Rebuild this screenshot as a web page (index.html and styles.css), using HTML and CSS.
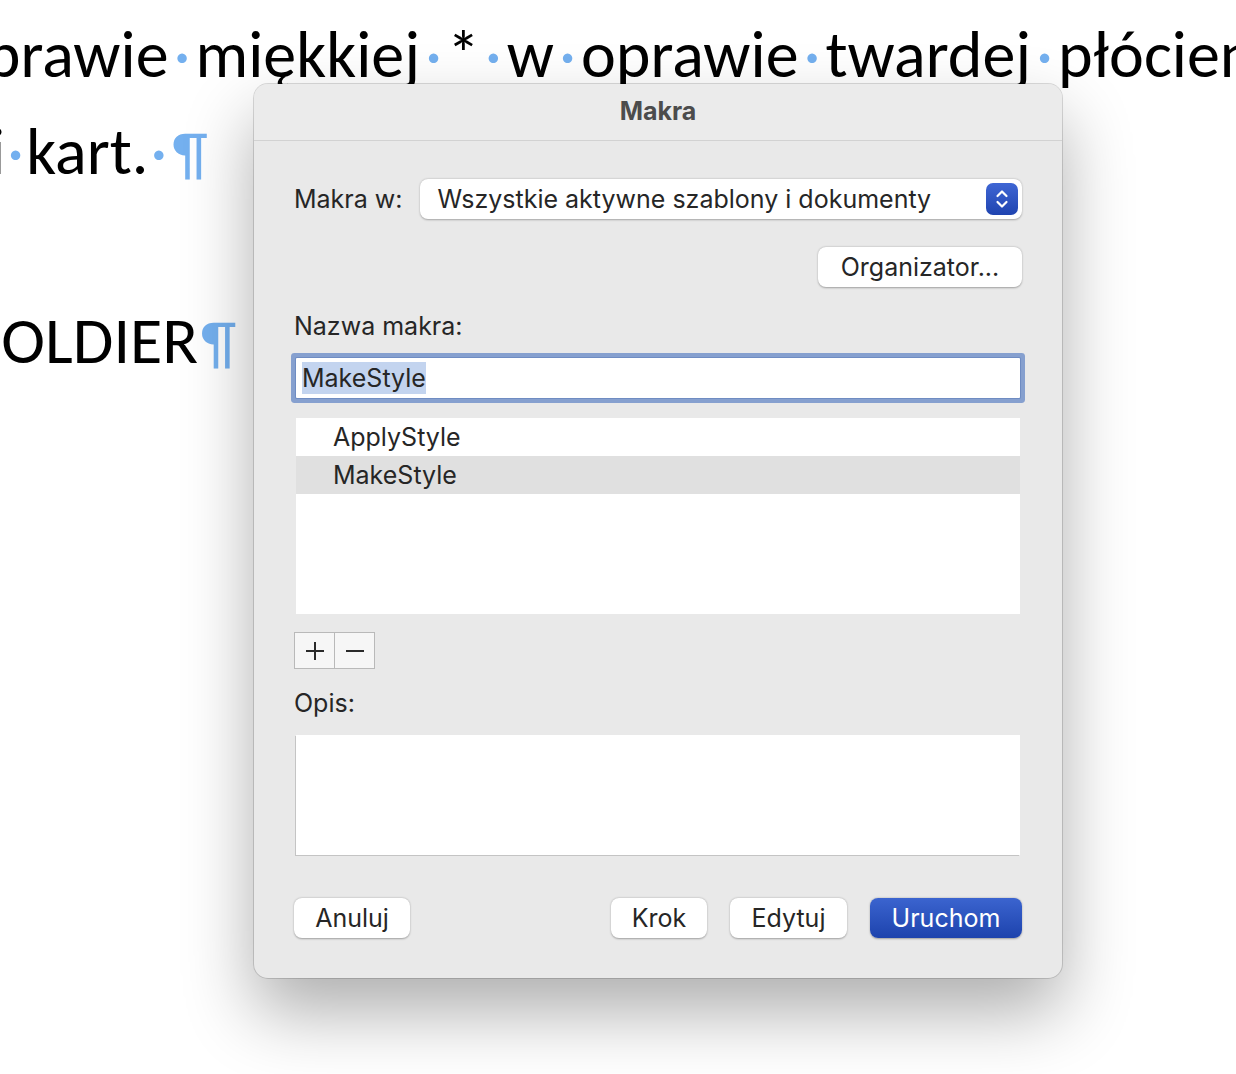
FILE: index.html
```html
<!DOCTYPE html>
<html lang="pl">
<head>
    <meta charset="UTF-8">
    <title>Makra</title>
    <link rel="stylesheet" href="styles.css">
</head>
<body>

    <div class="doc">
        <p class="linia l1">oprawie<span class="sp">·</span>miękkiej<span class="sp">·</span>*<span class="sp">·</span>w<span class="sp">·</span>oprawie<span class="sp">·</span>twardej<span class="sp">·</span>płóciennej</p>
        <p class="linia l2">i<span class="sp">·</span>kart.<span class="sp">·</span><span class="pil">¶</span></p>
        <p class="linia l3">SOLDIER<span class="pil">¶</span></p>
    </div>

    <div class="okno">
        <div class="tytul">Makra</div>

        <div class="tresc">
            <div class="wiersz">
                <span class="etykieta">Makra w:</span>
                <div class="wybor">
                    <span>Wszystkie aktywne szablony i dokumenty</span>
                    <span class="strzalki">
                        <svg width="16" height="22" viewBox="0 0 16 22">
                            <path d="M3.5 8 L8 3.5 L12.5 8" fill="none" stroke="#fff" stroke-width="2.2" stroke-linecap="round" stroke-linejoin="round"/>
                            <path d="M3.5 14 L8 18.5 L12.5 14" fill="none" stroke="#fff" stroke-width="2.2" stroke-linecap="round" stroke-linejoin="round"/>
                        </svg>
                    </span>
                </div>
            </div>

            <div class="wiersz-prawo">
                <button class="btn btn-org">Organizator...</button>
            </div>

            <div class="etykieta nazwa">Nazwa makra:</div>
            <div class="pole"><span class="zazn">MakeStyle</span></div>

            <div class="lista">
                <div class="poz">ApplyStyle</div>
                <div class="poz wybrana">MakeStyle</div>
            </div>

            <div class="plusminus">
                <span class="pm">
                    <svg width="20" height="20" viewBox="0 0 20 20"><path d="M10 1 V19 M1 10 H19" stroke="#2a2a2a" stroke-width="2"/></svg>
                </span>
                <span class="pm">
                    <svg width="20" height="20" viewBox="0 0 20 20"><path d="M1 10 H19" stroke="#2a2a2a" stroke-width="2"/></svg>
                </span>
            </div>

            <div class="etykieta opis-et">Opis:</div>
            <div class="opis"></div>

            <div class="przyciski">
                <button class="btn btn-anuluj">Anuluj</button>
                <div class="prawe">
                    <button class="btn btn-krok">Krok</button>
                    <button class="btn btn-edytuj">Edytuj</button>
                    <button class="btn btn-uruchom">Uruchom</button>
                </div>
            </div>
        </div>
    </div>

</body>
</html>
```

FILE: styles.css
```css
body {
    margin: 0;
    background-color: #ffffff;
    overflow: hidden;
    height: 1074px;
    position: relative;
    font-family: Inter, "Noto Sans", sans-serif;
}

/* tekst dokumentu w tle */
.doc {
    font-family: Carlito, Lato, "Open Sans", sans-serif;
    color: #000;
    font-size: 66px;
    white-space: nowrap;
    overflow: hidden;
}

.linia {
    margin: 0;
    height: 97px;
    line-height: 97px;
}

.l1 {
    margin-left: -49px;
    padding-top: 6px;
}

.l2 {
    margin-left: -10px;
    height: 95px;
}

.l3 {
    margin-top: 94px;
    margin-left: -29px;
}

.sp {
    color: #74b0ef;
    display: inline-block;
    width: 27px;
    text-align: center;
}

.l2 .sp {
    width: 21px;
}

.pil {
    color: #74b0ef;
    font-size: 60px;
    margin-left: 3px;
}

/* okno dialogowe */
.okno {
    position: absolute;
    left: 254px;
    top: 84px;
    width: 808px;
    height: 894px;
    background-color: #e9e9e9;
    border-radius: 14px;
    box-shadow: 0 0 0 1px rgba(0, 0, 0, 0.14), 0 34px 70px rgba(0, 0, 0, 0.32);
    color: #262626;
    font-size: 25px;
}

.tytul {
    height: 56px;
    line-height: 54px;
    text-align: center;
    font-weight: 700;
    color: #4c4c4c;
    border-bottom: 1px solid #d2d2d2;
    background-color: #ebebeb;
    border-radius: 14px 14px 0 0;
}

.tresc {
    padding: 38px 40px 40px 40px;
}

.wiersz {
    display: flex;
    align-items: center;
    gap: 18px;
}

.etykieta {
    line-height: 28px;
}

.wybor {
    flex: 1;
    height: 40px;
    background: #fff;
    border-radius: 8px;
    box-shadow: 0 0.5px 2px rgba(0, 0, 0, 0.3);
    display: flex;
    align-items: center;
    justify-content: space-between;
    padding: 0 4px 0 17px;
}

.strzalki {
    width: 32px;
    height: 32px;
    border-radius: 7px;
    background: linear-gradient(#3f66d4, #1f44b0);
    display: flex;
    align-items: center;
    justify-content: center;
}

.wiersz-prawo {
    display: flex;
    justify-content: flex-end;
    margin-top: 28px;
}

.btn {
    font-family: inherit;
    font-size: 25px;
    color: #262626;
    height: 40px;
    background: #fff;
    border: none;
    border-radius: 8px;
    box-shadow: 0 0.5px 2px rgba(0, 0, 0, 0.32);
    padding: 0;
}

.btn-org { width: 204px; }
.btn-anuluj { width: 116px; }
.btn-krok { width: 96px; }
.btn-edytuj { width: 117px; }

.btn-uruchom {
    width: 152px;
    color: #fff;
    background: linear-gradient(#3b64cf, #1d43ad);
}

.nazwa {
    margin-top: 25px;
}

.pole {
    margin: 18px 2px 0 2px;
    height: 40px;
    background: #fff;
    box-shadow: 0 0 0 1px #6f8cc2, 0 0 0 5px #86a0cf;
    border-radius: 1px;
    display: flex;
    align-items: center;
    padding-left: 6px;
}

.zazn {
    background-color: #c3d4ef;
    line-height: 32px;
}

.lista {
    margin: 20px 2px 0 2px;
    height: 196px;
    background: #fff;
}

.poz {
    height: 38px;
    line-height: 38px;
    padding-left: 37px;
}

.wybrana {
    background-color: #e0e0e0;
}

.plusminus {
    display: flex;
    margin-top: 18px;
}

.pm {
    width: 39px;
    height: 35px;
    border: 1px solid #b9b9b9;
    background: #f6f6f6;
    display: flex;
    align-items: center;
    justify-content: center;
}

.pm + .pm {
    border-left: none;
}

.opis-et {
    margin-top: 20px;
}

.opis {
    margin: 18px 2px 0 2px;
    height: 120px;
    background: #fff;
    box-shadow: -1px 1px 0 #c4c4c4;
}

.przyciski {
    display: flex;
    justify-content: space-between;
    margin-top: 43px;
}

.prawe {
    display: flex;
    gap: 23px;
}
```
